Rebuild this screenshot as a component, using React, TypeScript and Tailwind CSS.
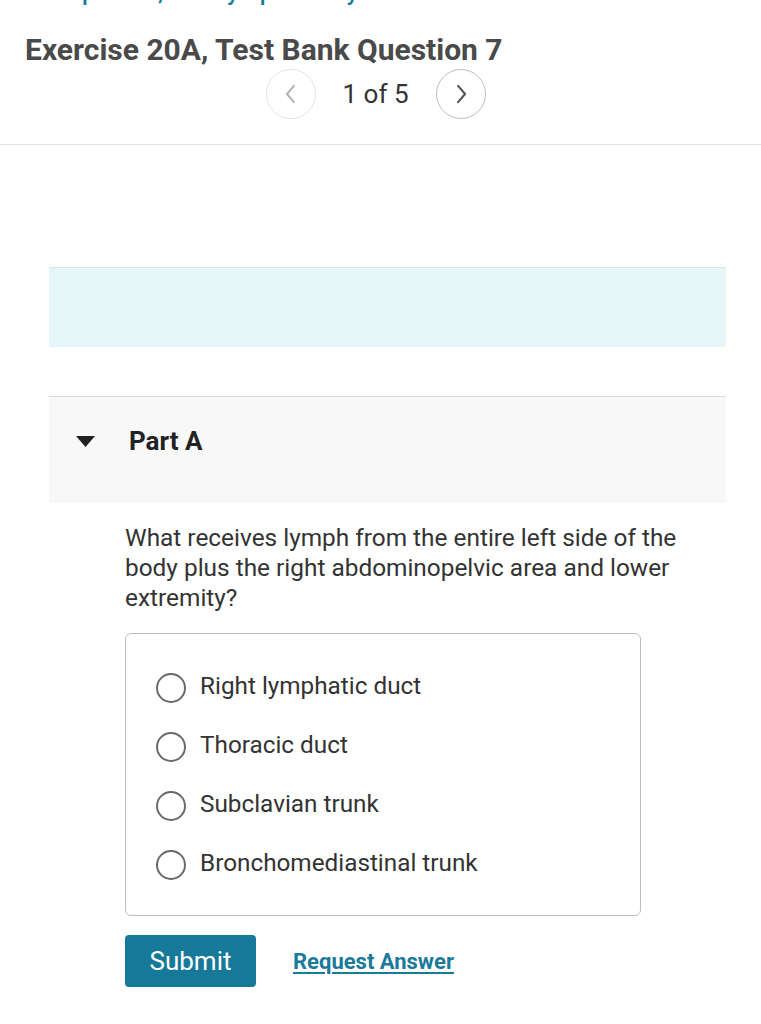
import React from "react";

const options = [
  "Right lymphatic duct",
  "Thoracic duct",
  "Subclavian trunk",
  "Bronchomediastinal trunk",
];

export default function App() {
  return (
    <div className="w-[761px] h-[1024px] overflow-hidden bg-white text-[#333] font-['Roboto',sans-serif]">
      <div className="h-[8px] overflow-hidden pl-[40px]">
        <div className="-mt-[23px] text-[24px] leading-[30px] font-medium text-[#137e96] whitespace-nowrap">
          Chapter 20, The Lymphatic System
        </div>
      </div>

      <h1 className="pl-[25px] pt-[25px] text-[30px] leading-[34px] font-bold text-[#4a4a4a]">
        Exercise 20A, Test Bank Question 7
      </h1>

      <div className="flex items-center justify-center gap-[27px] pr-[10px] pt-[2px]">
        <button className="w-[50px] h-[50px] rounded-full border border-[#e2e2e2] flex items-center justify-center text-[#b5b5b5]">
          <svg width="28" height="28" viewBox="0 0 24 24" fill="none" stroke="currentColor" strokeWidth="1.8" strokeLinecap="round" strokeLinejoin="round">
            <path d="M14.5 5l-6 7 6 7" />
          </svg>
        </button>
        <span className="text-[26px] leading-[30px] text-[#333]">1 of 5</span>
        <button className="w-[50px] h-[50px] rounded-full border border-[#bdbdbd] flex items-center justify-center text-[#555]">
          <svg width="28" height="28" viewBox="0 0 24 24" fill="none" stroke="currentColor" strokeWidth="1.8" strokeLinecap="round" strokeLinejoin="round">
            <path d="M9.5 5l6 7-6 7" />
          </svg>
        </button>
      </div>

      <div className="mt-[25px] border-t border-[#e4e4e4]" />

      <div className="mx-[49px] w-[677px]">
        <div className="mt-[122px] h-[80px] bg-[#e6f6f6] border-t border-[#d3e7e7]" />

        <div className="mt-[49px] h-[107px] bg-[#f8f8f8] border-t border-[#dcdcdc] flex items-center pb-[17px]">
          <svg className="ml-[27px]" width="19" height="11" viewBox="0 0 19 11">
            <polygon points="0,0 19,0 9.5,11" fill="#222" />
          </svg>
          <span className="ml-[34px] text-[26px] font-bold text-[#222]">Part A</span>
        </div>
      </div>

      <div className="pl-[125px]">
        <p className="mt-[20px] w-[585px] text-[24.4px] leading-[30px] text-[#333]">
          What receives lymph from the entire left side of the body plus the right abdominopelvic area and lower extremity?
        </p>

        <div className="mt-[20px] w-[516px] h-[283px] border border-[#bdbdbd] rounded-[6px] pl-[30px] pt-[24px] flex flex-col">
          {options.map((o) => (
            <label key={o} className="flex items-center h-[59px]">
              <span className="w-[30px] h-[30px] rounded-full border-2 border-[#6a6a6a] shrink-0" />
              <span className="ml-[14px] text-[24.3px] text-[#333] -mt-[3px]">{o}</span>
            </label>
          ))}
        </div>

        <div className="mt-[19px] flex items-center">
          <button className="w-[131px] h-[52px] rounded-[4px] bg-[#17799a] text-white text-[26px]">
            Submit
          </button>
          <a className="ml-[37px] text-[22px] font-bold text-[#1a7a99] underline underline-offset-[3px]">
            Request Answer
          </a>
        </div>
      </div>
    </div>
  );
}
